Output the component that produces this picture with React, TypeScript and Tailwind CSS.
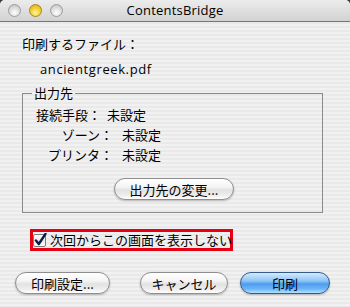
import type { ReactNode } from 'react'

const JP = "font-['Noto_Sans_CJK_JP','Noto_Sans_CJK_SC',sans-serif]"

function Light({ color }: { color: 'gray' | 'yellow' }) {
  return (
    <div
      className={`w-[13px] h-[13px] rounded-full border ${
        color === 'yellow'
          ? 'border-[#a8871c] bg-[radial-gradient(circle_at_50%_70%,#fff6a8_0%,#f6d338_45%,#d9a514_100%)]'
          : 'border-[#9c9c9c] bg-[radial-gradient(circle_at_50%_70%,#ffffff_0%,#e2e2e2_45%,#b9b9b9_100%)]'
      }`}
    />
  )
}

function AquaButton({ children, width, primary }: { children: ReactNode; width: string; primary?: boolean }) {
  return (
    <div
      className={`${width} h-[22px] rounded-full border flex items-center justify-center text-[13px] leading-none text-black shadow-[0_1px_2px_rgba(0,0,0,0.25)] ${
        primary
          ? 'border-[#34598c] bg-[linear-gradient(to_bottom,#d4ebfd_0%,#8cc4f5_40%,#4e9ced_55%,#6cb6f7_80%,#b2e2ff_100%)]'
          : 'border-[#8e8e8e] bg-[linear-gradient(to_bottom,#ffffff_0%,#f4f4f4_40%,#e2e2e2_55%,#ededed_80%,#ffffff_100%)]'
      }`}
    >
      {children}
    </div>
  )
}

function CheckBox() {
  return (
    <svg width="14" height="14" viewBox="0 0 14 14" className="shrink-0">
      <defs>
        <linearGradient id="cbg" x1="0" y1="0" x2="0" y2="1">
          <stop offset="0" stopColor="#ffffff" />
          <stop offset="0.5" stopColor="#e9e9e9" />
          <stop offset="1" stopColor="#fdfdfd" />
        </linearGradient>
      </defs>
      <rect x="0.5" y="1.5" width="12" height="12" rx="1.5" fill="url(#cbg)" stroke="#7d7d7d" />
      <path d="M3 7.5 L5.8 11 L12.5 0.8" fill="none" stroke="#0b1a48" strokeWidth="2.4" strokeLinecap="round" strokeLinejoin="round" />
    </svg>
  )
}

export default function App() {
  return (
    <div className="w-[350px] h-[307px] bg-[#3a3a3a]">
      <div
        className={`w-[350px] h-[307px] rounded-t-[5px] overflow-hidden flex flex-col bg-[repeating-linear-gradient(to_bottom,#f1f1f1_0px,#f1f1f1_2px,#e9e9e9_2px,#e9e9e9_4px)] ${JP}`}
      >
        {/* title bar */}
        <div className="h-[22px] shrink-0 grid grid-cols-[70px_1fr_70px] items-center border-b border-[#767676] bg-[linear-gradient(to_bottom,#ececec,#d2d2d2)]">
          <div className="flex items-center gap-[8px] pl-[8px]">
            <Light color="gray" />
            <Light color="yellow" />
            <Light color="gray" />
          </div>
          <div className="text-center text-[13px] leading-none text-black font-['Open_Sans',sans-serif] tracking-[0.2px]">
            ContentsBridge
          </div>
          <div />
        </div>

        <div className="pl-[22px] text-[13px] leading-[16px] text-black">
          <div className="mt-[14px]">印刷するファイル：</div>
          <div className="mt-[9px] pl-[18px] font-['Open_Sans',sans-serif] tracking-[0.6px]">ancientgreek.pdf</div>

          <fieldset className="mt-[8px] w-[301px] border border-[#8a8a8a] pb-[12px]">
            <legend className="ml-[9px] px-[2px]">出力先</legend>
            <div className="mt-[4px] leading-[20px]">
              <div className="flex pl-[13px]">
                <span>接続手段：</span>
                <span className="ml-[6px]">未設定</span>
              </div>
              <div className="flex">
                <span className="w-[90px] text-right">ゾーン：</span>
                <span className="ml-[9px]">未設定</span>
              </div>
              <div className="flex">
                <span className="w-[90px] text-right">プリンタ：</span>
                <span className="ml-[9px]">未設定</span>
              </div>
            </div>
            <div className="mt-[13px] ml-[91px]">
              <AquaButton width="w-[120px]">出力先の変更...</AquaButton>
            </div>
          </fieldset>

          <div className="mt-[16px] ml-[8px] w-[203px] h-[22px] border-[3px] border-[#e60012] flex items-center gap-[3px]">
            <CheckBox />
            <span className="whitespace-nowrap">次回からこの画面を表示しない</span>
          </div>
        </div>

        <div className="mt-[21px] px-[15px] flex items-center">
          <AquaButton width="w-[95px]">印刷設定...</AquaButton>
          <div className="ml-[30px]">
            <AquaButton width="w-[88px]">キャンセル</AquaButton>
          </div>
          <div className="ml-[12px]">
            <AquaButton width="w-[90px]" primary>
              印刷
            </AquaButton>
          </div>
        </div>
      </div>
    </div>
  )
}
